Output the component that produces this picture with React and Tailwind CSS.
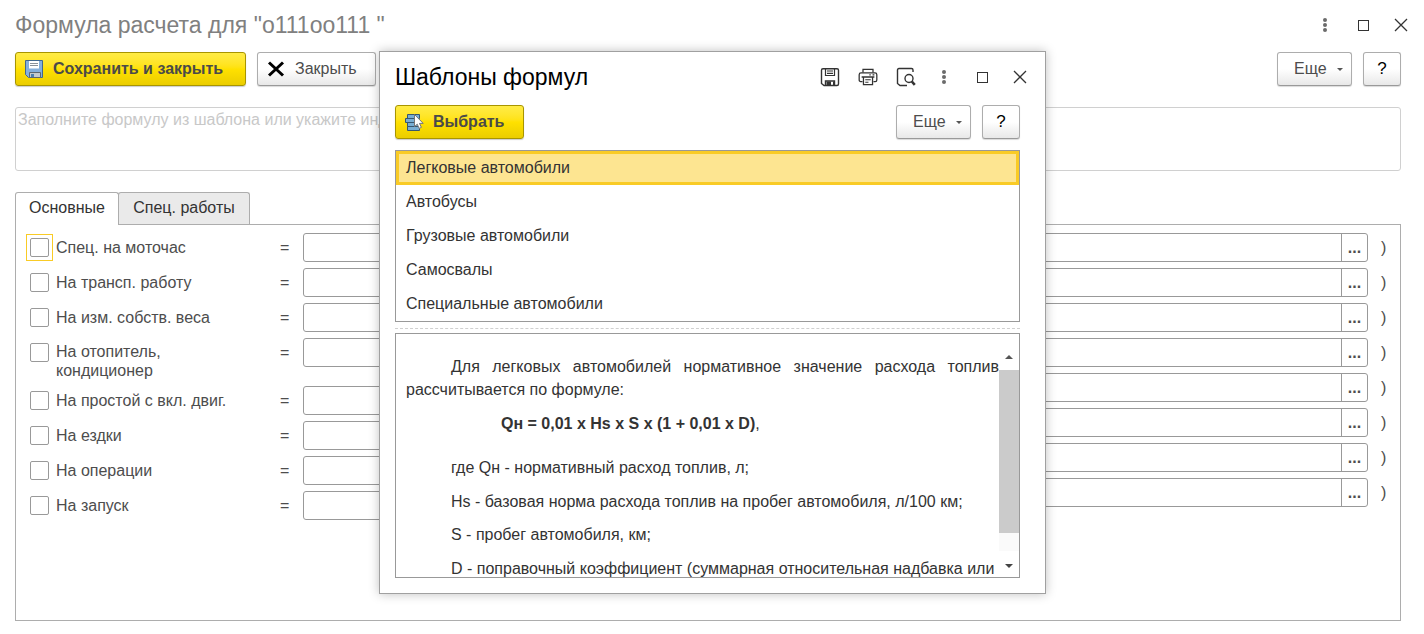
import React from 'react';

const checks = [
  { id: 'motohours', label: 'Спец. на моточас', focused: true },
  { id: 'transport', label: 'На трансп. работу' },
  { id: 'weight', label: 'На изм. собств. веса' },
  { id: 'heater', label: 'На отопитель, кондиционер', tall: true },
  { id: 'idle', label: 'На простой с вкл. двиг.' },
  { id: 'rides', label: 'На ездки' },
  { id: 'operations', label: 'На операции' },
  { id: 'start', label: 'На запуск' }
];

const templates = [
  'Легковые автомобили',
  'Автобусы',
  'Грузовые автомобили',
  'Самосвалы',
  'Специальные автомобили'
];

const DotsIcon = () => (
  <svg width="6" height="16" viewBox="0 0 6 16" fill="#6b6b6b">
    <circle cx="3" cy="3" r="2" />
    <circle cx="3" cy="8" r="2" />
    <circle cx="3" cy="13" r="2" />
  </svg>
);

const SquareIcon = () => (
  <svg width="12" height="12" viewBox="0 0 12 12" fill="none" stroke="#333">
    <rect x="1.5" y="1.5" width="10" height="10" />
  </svg>
);

const CloseIcon = () => (
  <svg width="14" height="14" viewBox="0 0 14 14" fill="none" stroke="#333" strokeWidth="1.3">
    <path d="M1 1l12 12M13 1L1 13" />
  </svg>
);

const DisketteIcon = () => (
  <svg width="20" height="20" viewBox="0 0 20 20" fill="none" stroke="#333" strokeWidth="1.4">
    <path d="M3 1.700h14q1.500 0 1.500 1.500v13.800q0 1.500-1.500 1.500H4l-2.500-2V3.200q0-1.500 1.500-1.500z" />
    <path d="M5.500 1.700v6.800h9V1.700M7 4h6M7 6.300h6" strokeWidth="1.200" />
    <path d="M5.500 18.500v-4.500h9v4.500" />
    <path d="M6.500 14.500h4.500v4H6.500zM13 14.500h1.500v4H13z" fill="#333" stroke="none" />
  </svg>
);

const PrinterIcon = () => (
  <svg width="22" height="20" viewBox="0 0 22 20" fill="none" stroke="#333" strokeWidth="1.4">
    <path d="M5.500 5V1.500h11V5" />
    <path d="M5 15H3q-1.700 0-1.700-1.700V7.500q0-2 2-2h15.400q2 0 2 2v5.800q0 1.700-1.700 1.700h-2" />
    <path d="M6 10h10v8.500H6zM4 10h14" />
    <path d="M8 13h6M8 15.700h3.500" strokeWidth="1.200" />
    <path d="M12.500 7.700h1.500M16 7.700h2" strokeWidth="1.200" />
  </svg>
);

const PreviewIcon = () => (
  <svg width="20" height="20" viewBox="0 0 20 20" fill="none" stroke="#333" strokeWidth="1.4">
    <path d="M11 18.500H4L1.500 16.500V3q0-1.500 1.500-1.500h12.500q1.500 0 1.500 1.500v2" />
    <circle cx="13" cy="11.500" r="4" />
    <path d="M15.800 14.500l3 3.300" strokeWidth="2.600" />
  </svg>
);

const SaveIcon = () => (
  <svg width="20" height="20" viewBox="0 0 20 20">
    <path d="M1.500 1.500h17v17h-14l-3-3z" fill="#84afdc" stroke="#41688f" />
    <path d="M5 2h10v7.500H5z" fill="#fff" />
    <path d="M6 4.500h8M6 6.500h8" stroke="#8a9199" />
    <path d="M5.500 13.500h11v5h-11z" fill="#c3c9cd" stroke="#5b6670" />
    <path d="M7 15h3v3H7z" fill="#4b7fae" />
  </svg>
);

const CrossIcon = () => (
  <svg width="20" height="20" viewBox="0 0 20 20" fill="none" stroke="#000" strokeWidth="3">
    <path d="M3 3.5l14 13M17 3.5l-14 13" />
  </svg>
);

const SelectIcon = () => (
  <svg width="20" height="20" viewBox="0 0 20 20">
    <path d="M3.500 2.500h12v4h-12zM3.500 10.500h12v4h-12zM3.500 14.500h12v4h-12zM1.500 6.500h13v4h-13z" fill="#78aed3" stroke="#36576f" />
    <path d="M10.500 2.500v12l2.800-2.300 1.800 4.200 2.300-1-1.900-4h3.700z" fill="#fff" stroke="#777" />
  </svg>
);

const Caret = () => <span className="h-0 w-0 border-x-3 border-t-3 border-x-transparent border-t-[#555]" />;

const PlainButton = ({ className, children, ...rest }) => (
  <button
    type="button"
    className={`flex h-[34px] shrink-0 items-center rounded-[3px] border border-[#adadad] border-b-[#999] bg-linear-to-b from-white from-50% to-[#e8e8e8] shadow-[0_1px_1px_#00000026] ${className}`}
    {...rest}
  >
    {children}
  </button>
);

const YellowButton = ({ className, children }) => (
  <button
    type="button"
    className={`flex h-[34px] shrink-0 items-center gap-[9px] rounded-[3px] border border-[#a89500] bg-linear-to-b from-[#ffec45] via-[#ffe100] to-[#ebcd00] pl-2 font-bold text-[#4a4a4a] shadow-[0_1px_1px_#00000033] ${className}`}
  >
    {children}
  </button>
);

const MoreAndHelp = () => (
  <div className="flex gap-[11px]">
    <PlainButton className="w-[75px] justify-between pr-2 pl-4">
      Еще
      <Caret />
    </PlainButton>
    <PlainButton className="w-[38px] justify-center text-[17px] text-black" aria-label="Справка">?</PlainButton>
  </div>
);

const WindowButtons = () => (
  <>
    <button type="button" aria-label="Меню" className="flex w-5 justify-center"><DotsIcon /></button>
    <button type="button" aria-label="Развернуть" className="flex w-5 justify-center"><SquareIcon /></button>
    <button type="button" aria-label="Закрыть окно" className="flex w-5 justify-center"><CloseIcon /></button>
  </>
);

const CheckRow = ({ item }) => (
  <div className={item.tall ? 'flex h-12 items-start' : 'flex h-[35px] items-start'}>
    <div className="flex w-[254px] shrink-0 items-start">
      <div className={`mt-px border p-[3px] ${item.focused ? 'border-[#f9cb26]' : 'border-transparent'}`}>
        <input
          id={item.id}
          type="checkbox"
          className="block h-[19px] w-[19px] appearance-none rounded-[2px] border border-[#999] bg-white"
        />
      </div>
      <label htmlFor={item.id} className={`ml-[3px] leading-[19px] ${item.tall ? 'max-w-[130px] pt-1' : 'pt-[5px]'}`}>
        {item.label}
      </label>
    </div>
    <span className="w-[23px] pt-[5px] leading-[19px]">=</span>
    <input
      type="text"
      aria-label={item.label}
      className="h-[29px] min-w-0 flex-1 rounded-[3px] border border-[#999] bg-white px-2"
    />
  </div>
);

const ValueRow = ({ index }) => (
  <div className="flex h-[35px] items-start">
    <div className="flex h-[29px] flex-1 rounded-[3px] border border-[#999]">
      <input type="text" aria-label={`Значение ${index}`} className="min-w-0 flex-1 px-2" />
      <button type="button" aria-label={`Выбрать значение ${index}`} className="w-[26px] border-l border-[#999] font-bold leading-5">
        ...
      </button>
    </div>
    <span className="w-8 pt-[5px] pl-[13px] leading-5">)</span>
  </div>
);

const TemplatesDialog = () => (
  <div
    role="dialog"
    aria-label="Шаблоны формул"
    className="absolute top-[51px] left-[379px] w-[667px] border border-[#a0a0a0] bg-white pr-[25px] pb-[15px] pl-[15px] shadow-[0_0_10px_#00000040]"
  >
    <div className="flex h-[53px] items-center pb-[3px]">
      <h2 className="flex-1 text-[23px] leading-7 text-black">Шаблоны формул</h2>
      <div className="-mr-2.5 flex items-center gap-[18px]">
        <button type="button" aria-label="Сохранить" className="flex w-5 justify-center"><DisketteIcon /></button>
        <button type="button" aria-label="Печать" className="flex w-5 justify-center"><PrinterIcon /></button>
        <button type="button" aria-label="Просмотр" className="flex w-5 justify-center"><PreviewIcon /></button>
        <WindowButtons />
      </div>
    </div>
    <div className="flex justify-between">
      <YellowButton className="w-[129px]">
        <SelectIcon />
        Выбрать
      </YellowButton>
      <MoreAndHelp />
    </div>
    <ul className="mt-[11px] h-[172px] border border-[#999] text-[#333]">
      {templates.map((name, i) => (
        <li
          key={name}
          className={i === 0
            ? 'flex h-[34px] items-center border-3 border-[#f9cb26] bg-[#fde591] px-[7px]'
            : 'flex h-[34px] items-center px-[10px]'}
        >
          {name}
        </li>
      ))}
    </ul>
    <div className="mt-1.5 border-t border-dashed border-[#d0d0d0]" />
    <div className="mt-1 flex h-[245px] overflow-hidden border border-[#999] text-[#333]">
      <div className="min-w-0 flex-1 pt-[21px] pl-[10px] leading-[23px]">
        <p className="text-justify indent-[45px]">
          Для легковых автомобилей нормативное значение расхода топлив рассчитывается по формуле:
        </p>
        <p className="mt-[11px] pl-[95px]"><b>Qн = 0,01 x Hs x S x (1 + 0,01 x D)</b>,</p>
        <p className="mt-[21px] pl-[45px]">где Qн - нормативный расход топлив, л;</p>
        <p className="mt-[11px] pl-[45px]">Hs - базовая норма расхода топлив на пробег автомобиля, л/100 км;</p>
        <p className="mt-[10px] pl-[45px]">S - пробег автомобиля, км;</p>
        <p className="mt-[11px] pl-[45px] whitespace-nowrap">D - поправочный коэффициент (суммарная относительная надбавка или</p>
      </div>
      <div className="flex w-5 shrink-0 flex-col items-center">
        <div className="flex h-9 items-end pb-[11px]">
          <span className="h-0 w-0 border-x-4 border-b-4 border-x-transparent border-b-[#555]" />
        </div>
        <div className="h-[163px] w-full bg-[#cbcbcb]" />
        <div className="h-[18px] w-full bg-[#fafafa]" />
        <div className="pt-[13px]">
          <span className="block h-0 w-0 border-x-4 border-t-4 border-x-transparent border-t-[#444]" />
        </div>
      </div>
    </div>
  </div>
);

export default function App() {
  return (
    <div className="relative min-h-screen overflow-hidden bg-white font-['Liberation_Sans',Arial,sans-serif] text-[16px] text-[#4d4d4d]">
      <main className="flex min-h-screen flex-col pr-[23px] pb-[13px] pl-[15px]">
        <header className="flex h-[52px] items-center pb-[3px]">
          <h1 className="flex-1 text-[23px] leading-7 text-[#808080]">Формула расчета для "о111оо111 "</h1>
          <div className="-mr-2.5 flex items-center gap-[18px]">
            <WindowButtons />
          </div>
        </header>

        <div className="flex justify-between">
          <div className="flex gap-[11px]">
            <YellowButton className="w-[231px]">
              <SaveIcon />
              Сохранить и закрыть
            </YellowButton>
            <PlainButton className="w-[119px] gap-[9px] pl-2">
              <CrossIcon />
              Закрыть
            </PlainButton>
          </div>
          <MoreAndHelp />
        </div>

        <textarea
          aria-label="Формула"
          placeholder="Заполните формулу из шаблона или укажите индивидуальную"
          className="mt-[21px] block h-16 w-full resize-none rounded-[3px] border border-[#d0d0d0] px-0.5 placeholder:text-[#c8c8c8]"
        />

        {/* Tabs */}
        <div role="tablist" className="mt-[21px] flex text-[#333]">
          <button
            type="button"
            role="tab"
            aria-selected="true"
            className="z-10 -mb-px h-[33px] w-[104px] rounded-t-[3px] border border-b-0 border-[#adadad] bg-white pb-0.5"
          >
            Основные
          </button>
          <button
            type="button"
            role="tab"
            aria-selected="false"
            className="-ml-px h-8 w-[132px] rounded-t-[3px] border border-b-0 border-[#adadad] bg-[#eaeaea] pb-0.5"
          >
            Спец. работы
          </button>
        </div>

        <section className="grid flex-1 grid-cols-2 border border-[#adadad]">
          <div className="pt-2 pl-2.5">
            {checks.map((item) => <CheckRow key={item.id} item={item} />)}
          </div>
          <div className="pt-2 pl-5">
            {checks.map((item, i) => <ValueRow key={item.id} index={i + 1} />)}
          </div>
        </section>
      </main>
      <TemplatesDialog />
    </div>
  );
}
